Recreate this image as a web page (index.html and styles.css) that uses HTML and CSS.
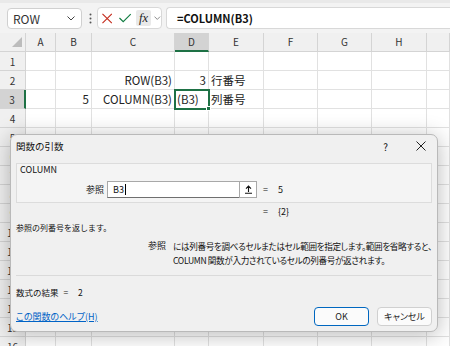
FILE: index.html
```html
<!DOCTYPE html>
<html lang="ja">
<head>
<meta charset="utf-8">
<title>関数の引数</title>
<link rel="stylesheet" href="styles.css">
</head>
<body>
<div class="app">
  <div class="toolbar">
    <div class="namebox">
      <span class="nbtext">ROW</span>
      <svg class="chev" width="8" height="5" viewBox="0 0 8 5"><path d="M0.5 0.5 L4 4 L7.5 0.5" fill="none" stroke="#444" stroke-width="1"/></svg>
    </div>
    <svg class="dots" width="3" height="11" viewBox="0 0 3 11"><circle cx="1.5" cy="1.5" r="1" fill="#555"/><circle cx="1.5" cy="5.5" r="1" fill="#555"/><circle cx="1.5" cy="9.5" r="1" fill="#555"/></svg>
    <div class="fbtns">
      <svg class="xicon" width="11" height="11" viewBox="0 0 11 11"><path d="M0.5 0.5 L10.5 10.5 M10.5 0.5 L0.5 10.5" stroke="#c42b1c" stroke-width="1.2"/></svg>
      <svg class="vicon" width="13" height="10" viewBox="0 0 13 10"><path d="M0.5 5 L4.5 9 L12.5 0.8" fill="none" stroke="#107c41" stroke-width="1.2"/></svg>
      <span class="fx">fx</span>
      <svg class="chev2" width="7" height="4" viewBox="0 0 7 4"><path d="M0.5 0.5 L3.5 3.5 L6.5 0.5" fill="none" stroke="#777" stroke-width="0.9"/></svg>
    </div>
    <div class="formula">=COLUMN(B3)</div>
  </div>

  <div class="sheet">
    <div class="corner"><span class="tri"></span></div>
    <div class="ch">A</div><div class="ch">B</div><div class="ch">C</div><div class="ch sel">D</div><div class="ch">E</div><div class="ch">F</div><div class="ch">G</div><div class="ch">H</div><div class="ch"></div>

    <div class="rh">1</div><div></div><div></div><div></div><div></div><div></div><div></div><div></div><div></div><div></div>
    <div class="rh">2</div><div></div><div></div><div class="num">ROW(B3)</div><div class="num">3</div><div class="txt">行番号</div><div></div><div></div><div></div><div></div>
    <div class="rh sel">3</div><div></div><div class="num">5</div><div class="num">COLUMN(B3)</div><div class="txt active">(B3)<span class="handle"></span></div><div class="txt">列番号</div><div></div><div></div><div></div><div></div>
    <div class="rh">4</div><div></div><div></div><div></div><div></div><div></div><div></div><div></div><div></div><div></div>
    <div class="rh">5</div><div></div><div></div><div></div><div></div><div></div><div></div><div></div><div></div><div></div>
    <div class="rh">6</div><div></div><div></div><div></div><div></div><div></div><div></div><div></div><div></div><div></div>
    <div class="rh">7</div><div></div><div></div><div></div><div></div><div></div><div></div><div></div><div></div><div></div>
    <div class="rh">8</div><div></div><div></div><div></div><div></div><div></div><div></div><div></div><div></div><div></div>
    <div class="rh">9</div><div></div><div></div><div></div><div></div><div></div><div></div><div></div><div></div><div></div>
    <div class="rh">10</div><div></div><div></div><div></div><div></div><div></div><div></div><div></div><div></div><div></div>
    <div class="rh">11</div><div></div><div></div><div></div><div></div><div></div><div></div><div></div><div></div><div></div>
    <div class="rh">12</div><div></div><div></div><div></div><div></div><div></div><div></div><div></div><div></div><div></div>
    <div class="rh">13</div><div></div><div></div><div></div><div></div><div></div><div></div><div></div><div></div><div></div>
    <div class="rh">14</div><div></div><div></div><div></div><div></div><div></div><div></div><div></div><div></div><div></div>
    <div class="rh">15</div><div></div><div></div><div></div><div></div><div></div><div></div><div></div><div></div><div></div>
    <div class="rh">16</div><div></div><div></div><div></div><div></div><div></div><div></div><div></div><div></div><div></div>
  </div>

  <div class="dialog">
    <div class="dtitle">
      <span class="dname">関数の引数</span>
      <span class="qmark">?</span>
      <svg class="close" width="10" height="10" viewBox="0 0 10 10"><path d="M0.5 0.5 L9.5 9.5 M9.5 0.5 L0.5 9.5" stroke="#222" stroke-width="1"/></svg>
    </div>
    <div class="group">
      <div class="legend">COLUMN</div>
      <div class="argrow">
        <span class="arglabel">参照</span>
        <div class="input">
          <span class="val">B3</span><span class="caret"></span>
          <span class="collapse"><svg width="9" height="9" viewBox="0 0 9 9"><path d="M4.5 7 L4.5 1.2 M2 3.6 L4.5 1.1 L7 3.6 M1 8.3 L8 8.3" fill="none" stroke="#111" stroke-width="1.1"/></svg></span>
        </div>
        <span class="eq">=</span><span class="res">5</span>
      </div>
    </div>
    <div class="eqrow"><span class="eq">=</span><span class="res">{2}</span></div>
    <div class="desc">参照の列番号を返します。</div>
    <div class="phelp">
      <span class="plabel">参照</span>
      <span class="ptext">には列番号を調べるセルまたはセル範囲を指定します。範囲を省略すると、<br>COLUMN 関数が入力されているセルの列番号が返されます。</span>
    </div>
    <div class="sep"></div>
    <div class="result">数式の結果 =  2</div>
    <div class="footer">
      <a class="help" href="#">この関数のヘルプ(H)</a>
      <span class="btn ok">OK</span>
      <span class="btn cancel">キャンセル</span>
    </div>
  </div>
</div>
</body>
</html>
```

FILE: styles.css
```css
* { box-sizing: border-box; margin: 0; padding: 0; }
body {
  width: 450px; height: 346px; overflow: hidden; background: #fff;
  font-family: "Noto Sans CJK JP", "Noto Sans", sans-serif; color: #222;
}
.app { position: relative; width: 450px; height: 346px; overflow: hidden; }

/* toolbar */
.toolbar {
  height: 33px; background: #f3f3f3; display: flex; align-items: center;
  padding-left: 7px; border-top: 3px solid #e9e9e9;
}
.namebox {
  width: 75px; height: 21px; background: #fff; border: 1px solid #d0d0d0; border-radius: 4px;
  display: flex; align-items: center; justify-content: space-between; padding: 0 5px 0 5px;
}
.nbtext { font-size: 12px; color: #333; }
.chev { margin-right: 1px; }
.dots { margin-left: 7px; }
.fbtns {
  margin-left: 5px; width: 65px; height: 22px; background: #fff; border: 1px solid #d8d8d8; border-radius: 4px;
  display: flex; align-items: center; padding-left: 4px;
}
.vicon { margin-left: 7px; }
.fx {
  margin-left: 4px; width: 17px; height: 16px; background: #e9e9e9; border-radius: 2px;
  font-family: "Liberation Serif", serif; font-style: italic; font-size: 12.5px; line-height: 16px;
  text-align: center; color: #222;
}
.chev2 { margin-left: 3px; }
.formula {
  margin-left: 4px; flex: 1; height: 22px; background: #fff; border: 1px solid #d8d8d8; border-right: none;
  border-radius: 4px 0 0 4px; font-size: 11px; font-weight: bold; line-height: 20px; padding-left: 10px; color: #111;
}

/* sheet */
.sheet {
  display: grid;
  grid-template-columns: 26px 30px 36px 83px 34px 55px 54px 54px 55px 23px;
  grid-auto-rows: 19px;
}
.sheet > div {
  border-right: 1px solid #e1e1e1; border-bottom: 1px solid #e1e1e1;
  font-size: 11.5px; line-height: 18px; white-space: nowrap; position: relative; color: #222;
}
.sheet > .corner { background: #f0f0f0; border-right: 1px solid #d4d4d4; border-bottom: 1px solid #d4d4d4; position: relative; }
.tri {
  position: absolute; right: 3px; bottom: 4px; width: 0; height: 0;
  border-left: 10px solid transparent; border-bottom: 10px solid #bcbcbc;
}
.sheet > .ch {
  background: #f0f0f0; border-right: 1px solid #d4d4d4; border-bottom: 1px solid #d4d4d4;
  text-align: center; font-size: 10px; color: #333; line-height: 18px;
}
.sheet > .ch.sel { background: #d3d3d3; border-bottom: 2px solid #1e7145; }
.sheet > .rh {
  background: #f0f0f0; border-right: 1px solid #d4d4d4; border-bottom: 1px solid #d4d4d4;
  text-align: center; font-size: 10px; color: #333; line-height: 19px;
}
.sheet > .rh.sel { background: #d3d3d3; border-right: 2px solid #1e7145; }
.sheet > .num { text-align: right; padding-right: 2px; line-height: 19px; }
.sheet > .txt { padding-left: 2px; line-height: 19px; }
.sheet > .active { outline: 2px solid #1e7145; outline-offset: -1px; z-index: 1; }
.handle {
  position: absolute; right: -3px; bottom: -3px; width: 5px; height: 5px;
  background: #1e7145; border: 1px solid #fff;
}

/* dialog */
.dialog {
  position: absolute; left: 10px; top: 134px; width: 428px; height: 198px;
  background: #f0f0f0; border: 1px solid #b9b9b9; border-radius: 7px;
  box-shadow: 0 3px 22px rgba(0,0,0,0.28);
  padding: 0 5px; font-size: 9px; color: #111;
  display: flex; flex-direction: column;
}
.dtitle { height: 22px; display: flex; align-items: center; padding-left: 0; }
.dname { font-size: 9.5px; flex: 1; }
.qmark { font-size: 10px; margin-right: 28px; }
.close { margin-right: 6px; }
.group {
  margin-top: 6px; height: 40px; border: 1px solid #dcdcdc; background: #f4f4f4;
  display: flex; flex-direction: column;
}
.legend { height: 12px; line-height: 12px; padding-left: 3px; font-size: 9px; }
.argrow { margin-top: 5px; height: 17px; display: flex; align-items: center; }
.arglabel { width: 87px; flex-shrink: 0; text-align: right; }
.input {
  margin-left: 3px; width: 150px; height: 17px; background: #fff; border: 1px solid #a8a8a8;
  border-bottom-color: #6f6f6f; display: flex; align-items: center; padding-left: 5px; position: relative;
}
.val { font-size: 9px; }
.caret { width: 1px; height: 11px; background: #000; margin-left: 1px; }
.collapse {
  position: absolute; right: -1px; top: -1px; width: 18px; height: 17px; background: #fff;
  border: 1px solid #a8a8a8; display: flex; align-items: center; justify-content: center;
}
.eq { margin-left: 6px; width: 15px; }
.eqrow { margin-top: 3px; height: 12px; line-height: 12px; display: flex; padding-left: 241px; }
.desc { margin-top: 4px; height: 12px; line-height: 12px; font-size: 8px; }
.phelp { margin-top: 5px; display: flex; line-height: 14px; }
.plabel { margin-left: 132px; width: 25px; flex-shrink: 0; }
.ptext { white-space: nowrap; font-size: 8.6px; letter-spacing: -0.35px; font-feature-settings: "palt"; }
.sep { margin-top: 8px; height: 1px; background: #dadada; }
.result { margin-top: 10px; height: 12px; line-height: 12px; font-size: 8.5px; white-space: pre; word-spacing: 3px; }
.footer { margin-top: 9px; height: 19px; display: flex; align-items: center; }
.help { flex: 1; color: #0063c6; text-decoration: underline; font-size: 9px; font-feature-settings: "palt"; }
.btn {
  width: 55px; height: 19px; display: flex; align-items: center; justify-content: center;
  background: #fbfbfb; border-radius: 4px; font-size: 9px; color: #1b1b1b; font-feature-settings: "palt";
}
.ok { border: 1.5px solid #0067c0; }
.cancel { margin-left: 8px; border: 1px solid #d0d0d0; }
```
